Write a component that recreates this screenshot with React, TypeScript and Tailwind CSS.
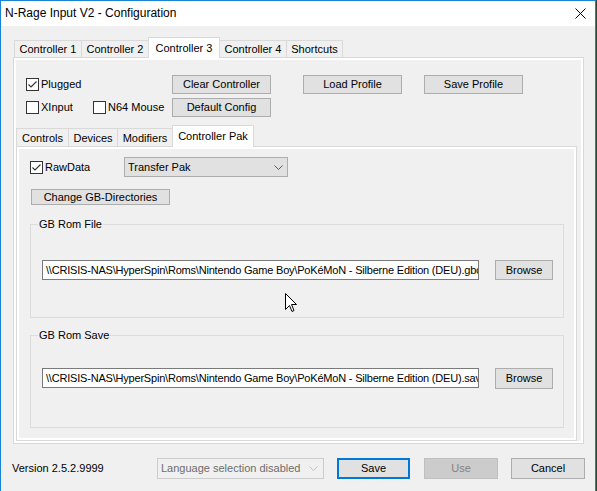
import React from "react";

const font = "font-['Liberation_Sans',Arial,sans-serif]";

const Check = ({
  label,
  checked = false,
  className = "",
}: {
  label: string;
  checked?: boolean;
  className?: string;
}) => (
  <div className={`flex items-center ${className}`}>
    <span className="flex h-[13px] w-[13px] shrink-0 items-center justify-center border border-[#333333] bg-white">
      {checked && (
        <svg width="11" height="11" viewBox="0 0 11 11">
          <path d="M1.5 5.5 L4 8 L9.5 2.5" fill="none" stroke="#333333" strokeWidth="1.1" />
        </svg>
      )}
    </span>
    <span className="ml-[2px]">{label}</span>
  </div>
);

const Btn = ({ label, className = "" }: { label: string; className?: string }) => (
  <div
    className={`flex shrink-0 items-center justify-center border border-[#adadad] bg-[#e1e1e1] ${className}`}
  >
    {label}
  </div>
);

const Chevron = ({ color }: { color: string }) => (
  <svg width="9" height="5" viewBox="0 0 9 5">
    <path d="M0.5 0.5 L4.5 4.5 L8.5 0.5" fill="none" stroke={color} />
  </svg>
);

// tab on a strip; selected one is taller and sits over the panel border
const Tab = ({
  label,
  width,
  selected,
  first,
  inner,
}: {
  label: string;
  width: string;
  selected?: boolean;
  first?: boolean;
  inner?: boolean;
}) => (
  <div
    className={`flex shrink-0 items-center justify-center border-l border-r border-t border-[#d9d9d9] ${width} ${
      first ? "" : "-ml-px"
    } ${
      selected
        ? `relative z-10 mb-[-1px] bg-white ${inner ? "h-[22px]" : "h-[21px]"}`
        : `bg-[#f0f0f0] pt-[1px] ${inner ? "h-[18px]" : "h-[17px]"}`
    }`}
  >
    {label}
  </div>
);

// path field: text runs past the right edge and is clipped, as in the dialog
const PathBox = ({ value }: { value: string }) => (
  <div className="flex h-[20px] w-[437px] shrink-0 items-center overflow-hidden whitespace-nowrap border border-[#7a7a7a] bg-white pl-[3px] tracking-[-0.2px]">
    <span>{value}</span>
  </div>
);

export default function App() {
  return (
    <div
      className={`relative flex h-[491px] w-[597px] overflow-hidden bg-[#f0f0f0] text-[11px] leading-[13px] text-black ${font}`}
    >
      <div className="flex h-[491px] w-[596px] shrink-0 flex-col border-l border-r border-t border-[#1883d7] bg-[#f0f0f0]">
        {/* Title bar */}
        <div className="flex h-[25px] shrink-0 items-center bg-white pl-[4px] text-[12px]">
          <span>N-Rage Input V2 - Configuration</span>
          <svg className="ml-auto mr-[9px]" width="11" height="11" viewBox="0 0 11 11">
            <path d="M0.5 0.5 L10.5 10.5 M10.5 0.5 L0.5 10.5" stroke="#000" strokeWidth="1" />
          </svg>
        </div>

        {/* Controller tabs */}
        <div className="ml-[13px] mt-[11px] flex h-[20px] items-end">
          <Tab label="Controller 1" width="w-[68px]" first />
          <Tab label="Controller 2" width="w-[68px]" />
          <Tab label="Controller 3" width="w-[72px]" selected />
          <Tab label="Controller 4" width="w-[68px]" />
          <Tab label="Shortcuts" width="w-[57px]" />
        </div>

        <div className="ml-[12px] flex h-[387px] w-[571px] flex-col border border-[#d9d9d9] bg-white p-[2px]">
          <div className="flex flex-1 flex-col bg-[#f0f0f0] pt-[15px]">
            <div className="flex">
              <div className="ml-[10px] flex w-[146px] flex-col gap-[4px]">
                <div className="flex h-[19px] items-center">
                  <Check label="Plugged" checked />
                </div>
                <div className="flex h-[19px] items-center">
                  <Check label="XInput" className="w-[67px]" />
                  <Check label="N64 Mouse" />
                </div>
              </div>
              <div className="flex flex-col gap-[4px]">
                <Btn label="Clear Controller" className="h-[19px] w-[99px]" />
                <Btn label="Default Config" className="h-[19px] w-[99px]" />
              </div>
              <Btn label="Load Profile" className="ml-[32px] h-[19px] w-[99px]" />
              <Btn label="Save Profile" className="ml-[22px] h-[19px] w-[99px]" />
            </div>

            {/* Sub tabs */}
            <div className="mt-[9px] flex h-[20px] items-end">
              <Tab label="Controls" width="w-[53px]" first inner />
              <Tab label="Devices" width="w-[50px]" inner />
              <Tab label="Modifiers" width="w-[56px]" inner />
              <Tab label="Controller Pak" width="w-[82px]" selected inner />
            </div>

            <div className="flex w-[561px] flex-1 flex-col border border-[#d9d9d9] bg-white p-[2px]">
              <div className="flex flex-1 flex-col bg-[#f0f0f0] pt-[8px]">
                <div className="flex h-[20px] items-center">
                  <Check label="RawData" checked className="ml-[11px] w-[94px]" />
                  <div className="flex h-[20px] w-[164px] items-center justify-between border border-[#adadad] bg-[#e1e1e1] pl-[3px] pr-[4px]">
                    <span>Transfer Pak</span>
                    <Chevron color="#5a5a5a" />
                  </div>
                </div>

                <Btn label="Change GB-Directories" className="ml-[12px] mt-[12px] h-[16px] w-[139px]" />

                <fieldset className="ml-[11px] mt-[13px] w-[534px] border border-[#dcdcdc] pb-[37px] pt-[29px]">
                  <legend className="ml-[7px] px-[1px] leading-[13px]">GB Rom File</legend>
                  <div className="ml-[11px] flex h-[20px] items-center">
                    <PathBox value={"\\\\CRISIS-NAS\\HyperSpin\\Roms\\Nintendo Game Boy\\PoKéMoN - Silberne Edition (DEU).gbc"} />
                    <Btn label="Browse" className="ml-[16px] h-[20px] w-[58px]" />
                  </div>
                </fieldset>

                <fieldset className="ml-[11px] mt-[11px] w-[534px] border border-[#dcdcdc] pb-[39px] pt-[26px]">
                  <legend className="ml-[7px] px-[1px] leading-[13px]">GB Rom Save</legend>
                  <div className="ml-[11px] flex h-[20px] items-center">
                    <PathBox value={"\\\\CRISIS-NAS\\HyperSpin\\Roms\\Nintendo Game Boy\\PoKéMoN - Silberne Edition (DEU).sav"} />
                    <Btn label="Browse" className="ml-[16px] h-[21px] w-[58px]" />
                  </div>
                </fieldset>
              </div>
            </div>
          </div>
        </div>

        {/* Bottom bar */}
        <div className="mt-[14px] flex h-[21px] items-center">
          <span className="ml-[11px] w-[145px] shrink-0">Version 2.5.2.9999</span>
          <div className="flex h-[21px] w-[167px] shrink-0 items-center justify-between border border-[#cccccc] bg-[#f0f0f0] pl-[3px] pr-[5px] text-[#6d6d6d]">
            <span>Language selection disabled</span>
            <Chevron color="#bfbfbf" />
          </div>
          <div className="ml-[13px] flex h-[21px] w-[73px] shrink-0 items-center justify-center border-2 border-[#0078d7] bg-[#e1e1e1]">
            Save
          </div>
          <div className="ml-[14px] flex h-[21px] w-[74px] shrink-0 items-center justify-center border border-[#bfbfbf] bg-[#cccccc] text-[#838383]">
            Use
          </div>
          <Btn label="Cancel" className="ml-[13px] h-[21px] w-[74px]" />
        </div>
      </div>
      <div className="h-[491px] w-[1px] shrink-0 bg-[#2b4a35]" />

      {/* mouse pointer */}
      <svg className="absolute left-[285px] top-[293px]" width="12" height="19" viewBox="0 0 12 19">
        <path
          d="M0.5 0.5 V16.5 L4.5 12.5 L7 18.5 L9 17.5 L6.5 11.5 H11.5 Z"
          fill="#fff"
          stroke="#000"
          strokeWidth="1"
          strokeLinejoin="miter"
        />
      </svg>
    </div>
  );
}
